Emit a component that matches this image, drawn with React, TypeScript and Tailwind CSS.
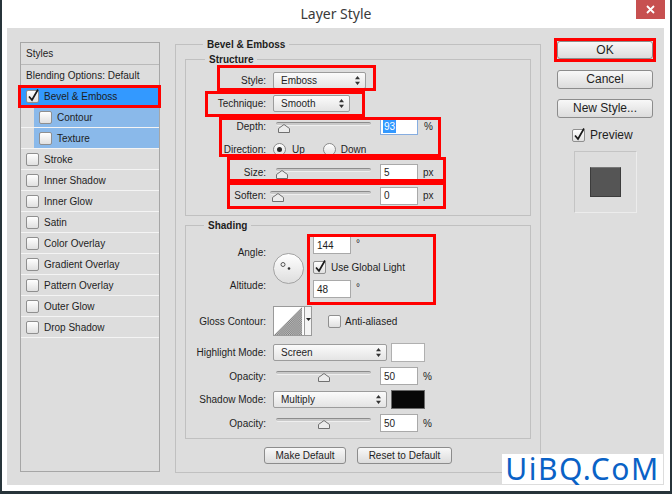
import React from 'react';

const Arrows = () => (
  <svg width="5" height="9" viewBox="0 0 5 9" className="shrink-0">
    <path d="M2.5 0 L5 3.2 L0 3.2 Z M2.5 9 L5 5.8 L0 5.8 Z" fill="#333" />
  </svg>
);

function Check({ checked }: { checked?: boolean }) {
  return (
    <span className="relative block w-[13px] h-[13px] shrink-0 rounded-[2px] border border-[#8f8f8f] bg-linear-to-b from-white to-[#e0e0e0]">
      {checked && (
        <svg width="13" height="15" viewBox="0 0 13 15" className="absolute left-0 top-[-3px] overflow-visible">
          <path d="M2 8.5 L5 12 L11 1.5" fill="none" stroke="#1a1a1a" strokeWidth="1.7" />
        </svg>
      )}
    </span>
  );
}

function Radio({ on }: { on?: boolean }) {
  return (
    <span className="flex items-center justify-center w-[13px] h-[13px] shrink-0 rounded-full border border-[#8a8a8a] bg-linear-to-b from-white to-[#e0e0e0]">
      {on && <span className="w-[5px] h-[5px] rounded-full bg-[#2a2a2a]" />}
    </span>
  );
}

function Select({ value, w }: { value: string; w: string }) {
  return (
    <div className={`${w} h-[17px] flex items-center justify-between pl-[7px] pr-[5px] rounded-[2px] border border-[#9c9c9c] bg-linear-to-b from-[#fbfbfb] to-[#e4e4e4]`}>
      <span>{value}</span>
      <Arrows />
    </div>
  );
}

// slider track + house-shaped thumb
function Slider({ w, pos }: { w: string; pos: string }) {
  return (
    <div className={`relative ${w} h-[12px] shrink-0`}>
      <div className="absolute left-0 right-0 top-[1px] h-[4px] rounded-[2px] border-t border-[#8c8c8c] bg-[#c9c9c9] border-b border-b-[#efefef]" />
      <svg width="12" height="9" viewBox="0 0 12 9" className={`absolute top-[3px] ${pos}`}>
        <path d="M6 0.5 L11.5 4.5 L11.5 8.5 L0.5 8.5 L0.5 4.5 Z" fill="#ececec" stroke="#707070" />
      </svg>
    </div>
  );
}

function Num({ v, h, sel }: { v: string; h: string; sel?: boolean }) {
  return (
    <div className={`w-[38px] ${h} shrink-0 flex items-center pl-[2px] bg-white border ${sel ? 'border-[#86ade0]' : 'border-[#a9a9a9]'}`}>
      {sel ? <span className="bg-[#3399ff] text-white px-[1px]">{v}</span> : <span className="pl-[1px]">{v}</span>}
    </div>
  );
}

function Label({ children }: { children: React.ReactNode }) {
  return <span className="w-[80px] shrink-0 text-right">{children}</span>;
}

function Btn({ children, cls }: { children: React.ReactNode; cls: string }) {
  return (
    <div className={`${cls} shrink-0 flex items-center justify-center rounded-[3px] border border-[#8c8c8c] bg-linear-to-b from-[#f8f8f8] to-[#dcdcdc]`}>
      {children}
    </div>
  );
}

const STYLES = [
  'Stroke',
  'Inner Shadow',
  'Inner Glow',
  'Satin',
  'Color Overlay',
  'Gradient Overlay',
  'Pattern Overlay',
  'Outer Glow',
  'Drop Shadow',
];

const RED = [
  'left-[18px] top-[85px] w-[143px] h-[23px]',
  'left-[554px] top-[38px] w-[102px] h-[24px]',
  'left-[217px] top-[65px] w-[159px] h-[26px]',
  'left-[205px] top-[91px] w-[160px] h-[26px]',
  'left-[219px] top-[117px] w-[222px] h-[40px]',
  'left-[227px] top-[157px] w-[219px] h-[25px]',
  'left-[227px] top-[182px] w-[219px] h-[27px]',
  'left-[307px] top-[234px] w-[129px] h-[71px]',
];

export default function App() {
  return (
    <div className="relative w-[672px] h-[494px] bg-[#27343a] overflow-hidden font-['Liberation_Sans',Arial,sans-serif] text-[10px] leading-[13px] text-[#1e1e1e]">
      <div className="ml-[2px] w-[668px] h-[491px] bg-white flex flex-col">
        {/* title bar */}
        <div className="relative h-[28px] shrink-0 flex items-center justify-center">
          <span className="font-['Noto_Sans',sans-serif] text-[14px] leading-[20px] text-[#3a3a3a]">Layer Style</span>
          <div className="absolute right-[5px] top-0 w-[29px] h-[19px] bg-[#c75050] flex items-center justify-center">
            <svg width="9" height="9" viewBox="0 0 9 9">
              <path d="M1 1 L8 8 M8 1 L1 8" stroke="white" strokeWidth="1.8" />
            </svg>
          </div>
        </div>

        {/* dialog body */}
        <div className="ml-[5px] mr-[6px] h-[457px] bg-[#dddddd] flex items-start">
          {/* styles list */}
          <div className="ml-[13px] mt-[14px] w-[140px] h-[430px] shrink-0 border border-[#a6a6a6] flex flex-col">
            <div className="h-[22px] flex items-center pl-[5px] border-b border-[#b9b9b9]">Styles</div>
            <div className="h-[21px] flex items-center pl-[5px] border-b border-[#f4f4f4]">Blending Options: Default</div>
            <div className="h-[21px] flex items-center pl-[5px] gap-[5px] bg-[#3399ff] border-b border-[#f4f4f4]">
              <Check checked />
              <span>Bevel &amp; Emboss</span>
            </div>
            {['Contour', 'Texture'].map(s => (
              <div key={s} className="h-[21px] pl-[13px] border-b border-[#f4f4f4]">
                <div className="h-full flex items-center pl-[5px] gap-[5px] bg-[#8ab9ea]">
                  <Check />
                  <span>{s}</span>
                </div>
              </div>
            ))}
            {STYLES.map(s => (
              <div key={s} className="h-[21px] flex items-center pl-[5px] gap-[5px] border-b border-[#f4f4f4]">
                <Check />
                <span>{s}</span>
              </div>
            ))}
          </div>

          {/* Bevel & Emboss group */}
          <fieldset className="ml-[15px] mt-[10px] w-[366px] shrink-0 border border-[#c0c0c0] px-[9px] pb-[8px]">
            <legend className="ml-[18px] px-[4px] font-bold">Bevel &amp; Emboss</legend>

            <fieldset className="mt-[2px] border border-[#c0c0c0] pt-[3px] pb-[8px]">
              <legend className="ml-[19px] px-[4px] font-bold">Structure</legend>
              <div className="h-[23px] flex items-center">
                <Label>Style:</Label>
                <div className="ml-[7px]"><Select value="Emboss" w="w-[93px]" /></div>
              </div>
              <div className="h-[23px] flex items-center">
                <Label>Technique:</Label>
                <div className="ml-[7px]"><Select value="Smooth" w="w-[77px]" /></div>
              </div>
              <div className="h-[23px] flex items-center">
                <Label>Depth:</Label>
                <div className="ml-[10px]"><Slider w="w-[95px]" pos="left-[2px]" /></div>
                <div className="ml-[9px]"><Num v="93" h="h-[17px]" sel /></div>
                <span className="ml-[6px]">%</span>
              </div>
              <div className="h-[23px] flex items-center">
                <Label>Direction:</Label>
                <span className="ml-[7px]"><Radio on /></span>
                <span className="ml-[6px]">Up</span>
                <span className="ml-[18px]"><Radio /></span>
                <span className="ml-[5px]">Down</span>
              </div>
              <div className="h-[23px] flex items-center">
                <Label>Size:</Label>
                <div className="ml-[10px]"><Slider w="w-[95px]" pos="left-0" /></div>
                <div className="ml-[9px]"><Num v="5" h="h-[18px]" /></div>
                <span className="ml-[5px]">px</span>
              </div>
              <div className="h-[23px] flex items-center">
                <Label>Soften:</Label>
                <div className="ml-[4px]"><Slider w="w-[101px]" pos="left-[2px]" /></div>
                <div className="ml-[9px]"><Num v="0" h="h-[18px]" /></div>
                <span className="ml-[5px]">px</span>
              </div>
            </fieldset>

            <fieldset className="mt-[3px] border border-[#c0c0c0] pt-[4px] pb-[6px]">
              <legend className="ml-[18px] px-[4px] font-bold">Shading</legend>
              {/* angle / altitude */}
              <div className="flex items-start">
                <div className="w-[80px] shrink-0 flex flex-col items-end">
                  <span className="mt-[10px]">Angle:</span>
                  <span className="mt-[20px]">Altitude:</span>
                </div>
                <div className="relative ml-[7px] mt-[17px] w-[31px] h-[31px] shrink-0 rounded-full border border-[#a3a3a3] bg-linear-to-b from-white to-[#dedede]">
                  <svg width="29" height="29" viewBox="0 0 29 29" className="absolute left-0 top-0">
                    <circle cx="9" cy="10.5" r="2" fill="none" stroke="#555" strokeWidth="1" />
                    <circle cx="15" cy="14.5" r="1.3" fill="#333" />
                  </svg>
                </div>
                <div className="ml-[9px] flex flex-col">
                  <div className="flex items-start">
                    <Num v="144" h="h-[18px]" />
                    <span className="ml-[5px] mt-[3px] leading-[10px]">°</span>
                  </div>
                  <div className="mt-[7px] flex items-center gap-[5px]">
                    <Check checked />
                    <span>Use Global Light</span>
                  </div>
                  <div className="mt-[6px] flex items-start">
                    <Num v="48" h="h-[18px]" />
                    <span className="ml-[5px] mt-[3px] leading-[10px]">°</span>
                  </div>
                </div>
              </div>
              {/* gloss contour */}
              <div className="mt-[8px] h-[30px] flex items-center">
                <Label>Gloss Contour:</Label>
                <div className="ml-[7px] flex">
                  <svg width="32" height="30" viewBox="0 0 32 30" className="border border-[#9a9a9a] bg-white">
                    <defs>
                      <pattern id="dith" width="2" height="2" patternUnits="userSpaceOnUse">
                        <rect width="2" height="2" fill="#c4c4c4" />
                        <rect width="1" height="1" fill="#7a7a7a" />
                        <rect x="1" y="1" width="1" height="1" fill="#7a7a7a" />
                      </pattern>
                    </defs>
                    <path d="M0 30 L30 0 L30 30 Z" fill="url(#dith)" />
                  </svg>
                  <div className="w-[7px] h-[30px] border-y border-r border-[#9a9a9a] bg-[#f4f4f4] flex justify-center pt-[11px]">
                    <svg width="5" height="3" viewBox="0 0 5 3"><path d="M0 0 L5 0 L2.5 3 Z" fill="#222" /></svg>
                  </div>
                </div>
                <span className="ml-[16px]"><Check /></span>
                <span className="ml-[4px]">Anti-aliased</span>
              </div>
              {/* highlight */}
              <div className="mt-[7px] h-[19px] flex items-center">
                <Label>Highlight Mode:</Label>
                <div className="ml-[7px]"><Select value="Screen" w="w-[114px]" /></div>
                <div className="ml-[4px] w-[34px] h-[19px] bg-white border border-[#b0b0b0]" />
              </div>
              <div className="mt-[5px] h-[18px] flex items-center">
                <Label>Opacity:</Label>
                <div className="ml-[10px]"><Slider w="w-[95px]" pos="left-[42px]" /></div>
                <div className="ml-[9px]"><Num v="50" h="h-[18px]" /></div>
                <span className="ml-[5px]">%</span>
              </div>
              {/* shadow */}
              <div className="mt-[5px] h-[19px] flex items-center">
                <Label>Shadow Mode:</Label>
                <div className="ml-[7px]"><Select value="Multiply" w="w-[114px]" /></div>
                <div className="ml-[4px] w-[34px] h-[19px] bg-[#080808] border border-[#6a6a6a]" />
              </div>
              <div className="mt-[5px] h-[18px] flex items-center">
                <Label>Opacity:</Label>
                <div className="ml-[10px]"><Slider w="w-[95px]" pos="left-[42px]" /></div>
                <div className="ml-[9px]"><Num v="50" h="h-[18px]" /></div>
                <span className="ml-[5px]">%</span>
              </div>
            </fieldset>

            <div className="mt-[8px] ml-[79px] flex gap-[11px]">
              <Btn cls="w-[82px] h-[17px]">Make Default</Btn>
              <Btn cls="w-[95px] h-[17px]">Reset to Default</Btn>
            </div>
          </fieldset>

          {/* right column */}
          <div className="ml-[16px] mt-[13px] w-[96px] shrink-0 flex flex-col text-[12px] leading-[15px]">
            <Btn cls="w-[96px] h-[18px]">OK</Btn>
            <Btn cls="mt-[11px] w-[96px] h-[19px]">Cancel</Btn>
            <Btn cls="mt-[10px] w-[96px] h-[19px]">New Style...</Btn>
            <div className="mt-[11px] ml-[15px] h-[13px] flex items-center gap-[5px]">
              <Check checked />
              <span>Preview</span>
            </div>
            <div className="mt-[9px] ml-[17px] w-[63px] h-[62px] border border-[#c4c4c4] border-r-[#ececec] border-b-[#ececec] flex items-center justify-center">
              <div className="w-[31px] h-[30px] bg-[#555555] border border-[#3c3c3c] border-t-[#777777]" />
            </div>
          </div>
        </div>
      </div>

      {/* red annotation boxes */}
      {RED.map((c, i) => (
        <div key={i} className={`absolute ${c} border-[3px] border-[#ff0000] pointer-events-none`} />
      ))}

      {/* watermark */}
      <div className="absolute left-[502px] top-[454px] w-[161px] h-[30px] bg-white flex items-center justify-center">
        <span className="font-['Noto_Sans',sans-serif] text-[30px] leading-[30px] tracking-[1.5px] text-[#0a62c6]">UiBQ.CoM</span>
      </div>
    </div>
  );
}
